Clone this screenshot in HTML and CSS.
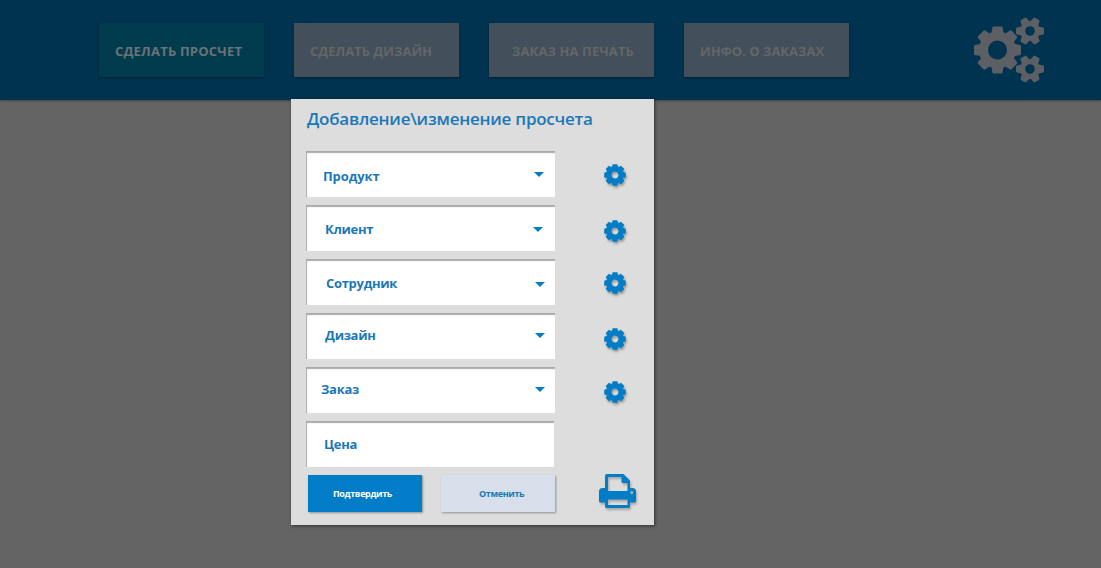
FILE: index.html
```html
<!DOCTYPE html>
<html lang="ru">
<head>
<meta charset="utf-8">
<title>Добавление\изменение просчета</title>
<link rel="stylesheet" href="styles.css">
</head>
<body>
<svg class="defs" aria-hidden="true">
  <symbol id="gear8" viewBox="-24 -24 48 48">
    <circle r="14" fill="none" stroke="currentColor" stroke-width="9"/>
    <g fill="currentColor">
      <path id="t8" d="M-6.2 -16 L-5.1 -22.6 Q-4.9 -23.5 -4 -23.500 H4 Q4.900 -23.500 5.100 -22.600 L6.200 -16Z"/>
      <use href="#t8" transform="rotate(45)"/><use href="#t8" transform="rotate(90)"/><use href="#t8" transform="rotate(135)"/><use href="#t8" transform="rotate(180)"/><use href="#t8" transform="rotate(225)"/><use href="#t8" transform="rotate(270)"/><use href="#t8" transform="rotate(315)"/>
    </g>
  </symbol>
  <symbol id="cog" viewBox="-11 -11 22 22">
    <circle r="6.2" fill="none" stroke="currentColor" stroke-width="5.4"/>
    <g fill="currentColor">
      <path id="tc" d="M-3 -7.5 L-2.6 -10.3 Q-2.5 -10.8 -2 -10.8 H2 Q2.5 -10.8 2.6 -10.3 L3 -7.5Z"/>
      <use href="#tc" transform="rotate(45)"/><use href="#tc" transform="rotate(90)"/><use href="#tc" transform="rotate(135)"/><use href="#tc" transform="rotate(180)"/><use href="#tc" transform="rotate(225)"/><use href="#tc" transform="rotate(270)"/><use href="#tc" transform="rotate(315)"/>
    </g>
  </symbol>
  <symbol id="gear6" viewBox="-15 -15 30 30">
    <circle r="7.4" fill="none" stroke="currentColor" stroke-width="5.2"/>
    <g fill="currentColor">
      <path id="t6" d="M7.5 -4.7 L13 -3.4 Q14 -3.1 14 -2.3 V2.3 Q14 3.1 13 3.4 L7.5 4.7Z"/>
      <use href="#t6" transform="rotate(60)"/><use href="#t6" transform="rotate(120)"/><use href="#t6" transform="rotate(180)"/><use href="#t6" transform="rotate(240)"/><use href="#t6" transform="rotate(300)"/>
    </g>
  </symbol>
</svg>
<header class="topbar">
  <nav class="nav">
    <a class="tab tab-active"><span>СДЕЛАТЬ ПРОСЧЕТ</span></a>
    <a class="tab"><span>СДЕЛАТЬ ДИЗАЙН</span></a>
    <a class="tab tab-print"><span>ЗАКАЗ НА ПЕЧАТЬ</span></a>
    <a class="tab"><span>ИНФО. О ЗАКАЗАХ</span></a>
  </nav>
  <svg class="settings" viewBox="0 0 72 66">
    <use href="#gear8" x="0.5" y="9" width="48" height="48"/>
    <use href="#gear6" x="42" y="-1" width="30" height="30"/>
    <use href="#gear6" x="42" y="37" width="30" height="30"/>
  </svg>
</header>
<main class="dialog">
  <h1 class="title">Добавление\изменение просчета</h1>
  <div class="row product"><div class="field"><span class="label">Продукт</span><i class="arrow"></i></div><svg class="cog"><use href="#cog"/></svg></div>
  <div class="row client"><div class="field"><span class="label">Клиент</span><i class="arrow"></i></div><svg class="cog"><use href="#cog"/></svg></div>
  <div class="row employee"><div class="field"><span class="label">Сотрудник</span><i class="arrow"></i></div><svg class="cog"><use href="#cog"/></svg></div>
  <div class="row design"><div class="field"><span class="label">Дизайн</span><i class="arrow"></i></div><svg class="cog"><use href="#cog"/></svg></div>
  <div class="row order"><div class="field"><span class="label">Заказ</span><i class="arrow"></i></div><svg class="cog"><use href="#cog"/></svg></div>
  <div class="row price"><div class="field"><span class="label">Цена</span></div></div>
  <div class="actions">
    <button class="btn confirm"><span>Подтвердить</span></button>
    <button class="btn cancel"><span>Отменить</span></button>
    <svg class="printer" viewBox="0 0 38 35">
      <path fill="currentColor" fill-rule="evenodd" d="M8 0H24.5L31 6.5V14H33.5Q37 14 37 17.5V27Q37 28.5 35.5 28.5H31V32.5Q31 34 29.5 34H8Q6 34 6 32.5V28.5H1.500Q0 28.500 0 27V17.500Q0 14 3.500 14H6V2Q6 0 8 0ZM9 3V17H28.500V9H24Q22.500 9 22.500 7.500V3ZM9 25.500V31H28.500V25.500ZM32.800 17A1.500 1.500 0 1 0 32.800 20A1.500 1.500 0 1 0 32.800 17Z"/>
    </svg>
  </div>
</main>
</body>
</html>
```
FILE: styles.css
```css
* { box-sizing: border-box; }
body {
  margin: 0;
  height: 568px;
  overflow: hidden;
  background: #646464;
  font-family: "Open Sans", "Noto Sans", sans-serif;
}
.defs { position: absolute; width: 0; height: 0; }
.topbar {
  height: 100px;
  background: #003350;
  box-shadow: 0 1px 2px rgba(0, 0, 0, .35);
  padding: 23px 0 0 99px;
  display: flex;
  align-items: flex-start;
}
.nav { display: flex; gap: 30px; }
.tab {
  width: 165px;
  height: 54px;
  padding-left: 16px;
  display: flex;
  align-items: center;
  background: #434f5a;
  color: #646668;
  font-size: 13px;
  font-weight: 700;
  white-space: nowrap;
  box-shadow: 0 1px 2px rgba(0, 0, 0, .4);
}
.tab span { padding-top: 2px; }
.tab-active { background: #003b4e; color: #6b7376; letter-spacing: .2px; }
.tab-print { padding-left: 23px; letter-spacing: .1px; }
.settings { width: 72px; height: 66px; margin: -6px 0 0 124px; color: #5c6064; }
.dialog {
  position: relative;
  width: 363px;
  height: 426px;
  margin: -1px 0 0 291px;
  padding: 0 15px;
  background: #ddd;
  box-shadow: 1px 1px 3px rgba(0, 0, 0, .5);
  color: #1a78b8;
}
.title {
  margin: 0;
  height: 52px;
  padding: 8px 0 0 1px;
  font-size: 17px;
  line-height: 24px;
  font-weight: 600;
  letter-spacing: -.24px;
  white-space: nowrap;
}
.row { display: flex; height: 46px; margin-bottom: 8px; }
.field {
  width: 249px;
  height: 46px;
  display: flex;
  align-items: flex-start;
  justify-content: space-between;
  background: #fff;
  box-shadow: inset 1px 2px 1px #aaa;
  font-size: 13px;
  line-height: 18px;
  font-weight: 700;
  letter-spacing: -.3px;
}
.label { padding: 16px 0 0 17px; }
.product .label { letter-spacing: -.1px; }
.arrow {
  margin: 21px 11px 0 0;
  border: 5px solid transparent;
  border-top-color: #007dc6;
  border-bottom: 0;
}
.cog {
  width: 22px;
  height: 22px;
  margin: 12.5px 0 0 48.5px;
  color: #007dc6;
  overflow: visible;
  filter: drop-shadow(1px 2px 1px rgba(0, 0, 0, .3));
}
.client .label { padding: 15px 0 0 19px; }
.client .arrow { margin: 22px 12px 0 0; }
.client .cog { margin-top: 14.5px; }
.employee .label { padding: 15px 0 0 20px; }
.employee .arrow { margin: 23px 10px 0 0; }
.design .label { padding: 13px 0 0 19px; }
.design .arrow, .order .arrow { margin: 20px 10px 0 0; }
.design .cog { margin-top: 14.5px; }
.order .cog { margin-top: 13.5px; }
.order .label { padding: 13px 0 0 15px; }
.price .field { width: 248px; }
.price .label { padding: 14px 0 0 18px; }
.actions { display: flex; padding-left: 2px; }
.btn {
  width: 114px;
  height: 37px;
  border: 0;
  padding: 0;
  display: flex;
  align-items: center;
  font: 700 9px "Open Sans", "Noto Sans", sans-serif;
  letter-spacing: -.35px;
  box-shadow: 1px 1px 2px rgba(0, 0, 0, .35);
}
.confirm { padding-left: 25px; background: #007dc6; color: #fff; }
.cancel { margin-left: 19px; padding-left: 38px; background: #d7dfea; color: #1a78b8; }
.printer {
  width: 38px;
  height: 35px;
  margin: -1px 0 0 44px;
  color: #007dc6;
  overflow: visible;
  filter: drop-shadow(1px 2px 1px rgba(0, 0, 0, .25));
}
```
